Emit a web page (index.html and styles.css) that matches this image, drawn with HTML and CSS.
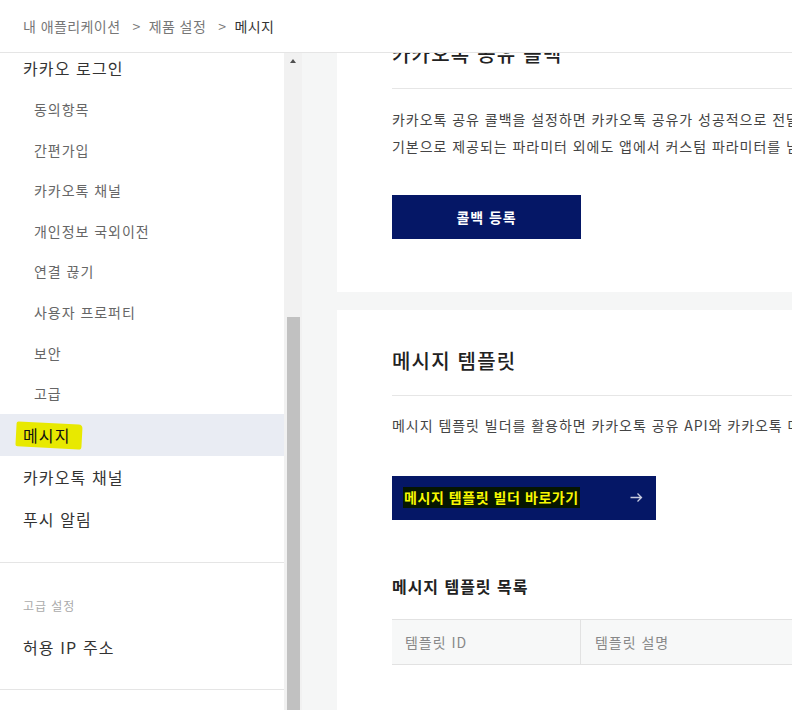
FILE: index.html
```html
<!DOCTYPE html>
<html lang="ko">
<head>
    <meta charset="UTF-8">
    <meta name="viewport" content="width=device-width, initial-scale=1.0">
    <title>메시지 - 내 애플리케이션</title>
    <link rel="stylesheet" href="styles.css">
</head>
<body>

    <!-- Breadcrumb -->
    <div class="topbar">
        <span class="crumb">내 애플리케이션</span>
        <span class="crumb-sep">&gt;</span>
        <span class="crumb">제품 설정</span>
        <span class="crumb-sep">&gt;</span>
        <span class="crumb current">메시지</span>
    </div>

    <div class="layout">
        <div class="sidebar">
            <div class="nav">
                <div class="nav-group">
                    <a class="nav-item" href="#">카카오 로그인</a>
                    <a class="nav-sub" href="#">동의항목</a>
                    <a class="nav-sub" href="#">간편가입</a>
                    <a class="nav-sub" href="#">카카오톡 채널</a>
                    <a class="nav-sub" href="#">개인정보 국외이전</a>
                    <a class="nav-sub" href="#">연결 끊기</a>
                    <a class="nav-sub" href="#">사용자 프로퍼티</a>
                    <a class="nav-sub" href="#">보안</a>
                    <a class="nav-sub" href="#">고급</a>
                    <a class="nav-item active" href="#"><span class="marker">메시지</span></a>
                    <a class="nav-item" href="#">카카오톡 채널</a>
                    <a class="nav-item" href="#">푸시 알림</a>
                </div>
                <div class="nav-group nav-group-extra">
                    <div class="nav-label">고급 설정</div>
                    <a class="nav-item" href="#">허용 IP 주소</a>
                </div>
            </div>
        </div>

        <div class="scrollbar">
            <div class="sb-arrow"></div>
            <div class="sb-thumb"></div>
        </div>

        <main class="content">
            <section class="card card-first">
                <h3 class="card-title">카카오톡 공유 콜백</h3>
                <p class="card-desc">카카오톡 공유 콜백을 설정하면 카카오톡 공유가 성공적으로 전달되었을 때 지정한 URL로 콜백 요청을 받을 수 있습니다.<br>기본으로 제공되는 파라미터 외에도 앱에서 커스텀 파라미터를 넘겨받을 수 있습니다.</p>
                <button class="btn btn-center">콜백 등록</button>
            </section>

            <section class="card">
                <h3 class="card-title">메시지 템플릿</h3>
                <p class="card-desc">메시지 템플릿 빌더를 활용하면 카카오톡 공유 API와 카카오톡 메시지 API에서 사용할 메시지 템플릿을 만들 수 있습니다.</p>
                <button class="btn btn-link">
                    <span class="marker-dark">메시지 템플릿 빌더 바로가기</span>
                    <svg class="arrow" width="13" height="11" viewBox="0 0 13 11">
                        <path d="M0.5 5.5H11.5M7.5 1.5L11.5 5.5L7.5 9.5" fill="none" stroke="#c9ccdf" stroke-width="1.3"/>
                    </svg>
                </button>

                <h4 class="list-title">메시지 템플릿 목록</h4>
                <table class="tpl-table">
                    <thead>
                        <tr>
                            <th class="col-id">템플릿 ID</th>
                            <th>템플릿 설명</th>
                        </tr>
                    </thead>
                </table>
            </section>
        </main>
    </div>

</body>
</html>
```

FILE: styles.css
```css
body {
    margin: 0;
    width: 792px;
    height: 710px;
    overflow: hidden;
    font-family: "Noto Sans CJK KR", "Noto Sans", sans-serif;
    letter-spacing: 0.06em;
    color: #333;
    background: #f5f6f6;
}
a {
    text-decoration: none;
    color: inherit;
}

/* top bar */
.topbar {
    height: 52px;
    display: flex;
    align-items: center;
    padding-left: 23px;
    background: #fff;
    border-bottom: 1px solid #e5e5e5;
    font-size: 14px;
    letter-spacing: 0.03em;
    color: #777;
}
.crumb-sep {
    margin: 0 8px 0 12px;
}
.crumb.current {
    color: #333;
}

.layout {
    display: flex;
    height: 657px;
}

/* sidebar */
.sidebar {
    width: 284px;
    flex-shrink: 0;
    background: #fff;
    overflow: hidden;
}
.nav {
    margin-top: -6px;
}
.nav-group {
    display: flex;
    flex-direction: column;
    padding-bottom: 22px;
    border-bottom: 1px solid #e5e5e5;
}
.nav-group-extra {
    padding-top: 34px;
    padding-bottom: 21px;
}
.nav-item {
    font-size: 16px;
    line-height: 42px;
    padding-left: 23px;
    letter-spacing: 0.07em;
    color: #333;
}
.nav-item.active {
    background: #e9ecf3;
    color: #111;
}
.nav-sub {
    font-size: 14px;
    line-height: 40.6px;
    padding-left: 34px;
    color: #666;
}
.nav-label {
    font-size: 12px;
    line-height: 18px;
    padding-left: 23px;
    margin-bottom: 11px;
    color: #aaa;
}
.marker {
    position: relative;
    z-index: 0;
}
.marker::before {
    content: "";
    position: absolute;
    left: -7px;
    right: -11px;
    top: 0;
    bottom: -1px;
    background: #e8e900;
    border-radius: 2px 4px 3px 2px;
    transform: rotate(3deg);
    z-index: -1;
}

/* fake scrollbar */
.scrollbar {
    width: 18px;
    flex-shrink: 0;
    background: #f1f1f1;
    display: flex;
    flex-direction: column;
    align-items: center;
}
.sb-arrow {
    margin-top: 6px;
    width: 0;
    height: 0;
    border-left: 3.5px solid transparent;
    border-right: 3.5px solid transparent;
    border-bottom: 4px solid #505050;
}
.sb-thumb {
    margin-top: 254px;
    width: 13px;
    flex: 1;
    background: #c1c1c1;
}

/* content */
.content {
    flex: 1;
    overflow: hidden;
    padding-left: 35px;
}
.card {
    width: 700px;
    background: #fff;
    padding: 36px 0 53px 55px;
    margin-top: 18px;
}
.card-first {
    margin-top: -50px;
}
.card-title {
    margin: 0;
    font-size: 20px;
    line-height: 30px;
    font-weight: 500;
    letter-spacing: 0.06em;
    color: #222;
    padding-bottom: 19px;
    border-bottom: 1px solid #e6e6e6;
}
.card-desc {
    margin: 16.5px 0 0;
    font-size: 14px;
    line-height: 27px;
    color: #444;
    white-space: nowrap;
}
.btn {
    display: flex;
    align-items: center;
    height: 44px;
    margin-top: 35px;
    border: 0;
    background: #051766;
    color: #fff;
    font-family: inherit;
    letter-spacing: inherit;
    font-size: 14px;
    font-weight: bold;
    cursor: pointer;
}
.btn-center {
    width: 189px;
    justify-content: center;
}
.btn-link {
    width: 264px;
    margin-top: 36.5px;
    justify-content: space-between;
    padding: 0 13px 0 11px;
}
.marker-dark {
    background: #061600;
    color: #f8f800;
    line-height: 21px;
    padding: 0 1px;
    letter-spacing: 0.04em;
}
.list-title {
    margin: 54px 0 21px;
    font-size: 16px;
    line-height: 24px;
    font-weight: bold;
    color: #222;
}
.tpl-table {
    width: 645px;
    border-collapse: collapse;
}
.tpl-table th {
    height: 44px;
    padding: 0 0 0 14px;
    background: #f7f8f8;
    border-top: 1px solid #e2e2e2;
    border-bottom: 1px solid #e2e2e2;
    border-left: 1px solid #e2e2e2;
    text-align: left;
    font-size: 14px;
    font-weight: normal;
    color: #888;
}
.tpl-table th.col-id {
    width: 175px;
    border-left: 0;
    padding-left: 13px;
}
```
